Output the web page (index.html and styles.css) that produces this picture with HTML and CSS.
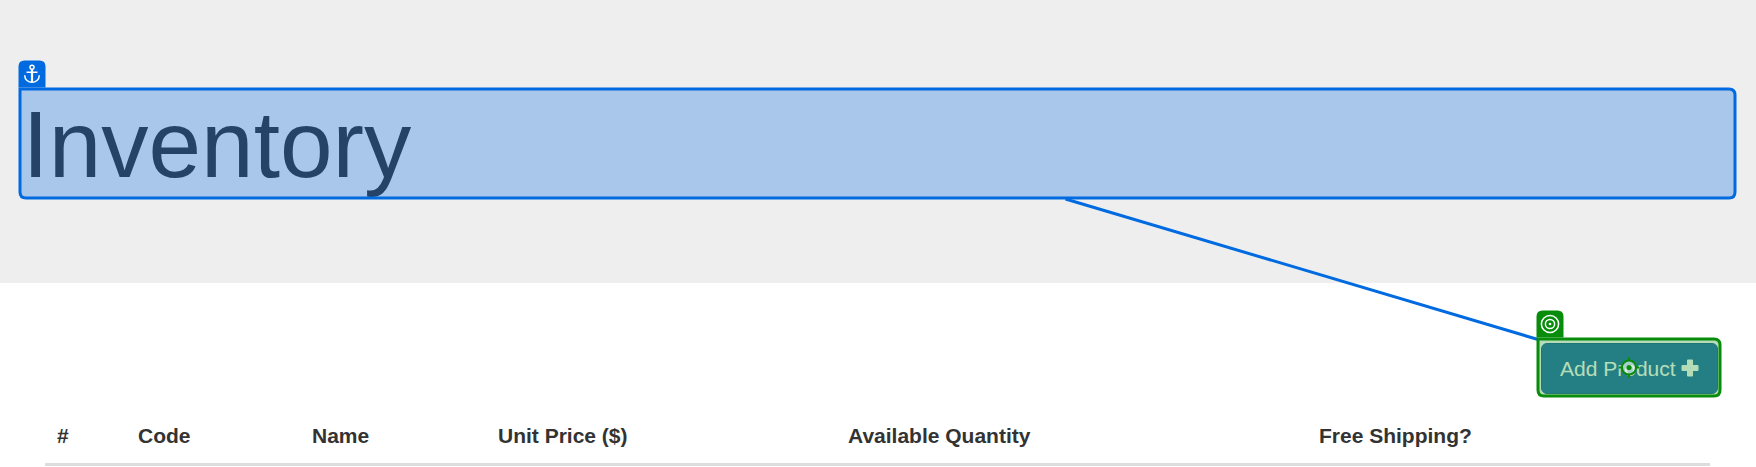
FILE: index.html
```
<!DOCTYPE html>
<html lang="en">
<head>
<meta charset="utf-8">
<title>Inventory</title>
<link rel="stylesheet" href="styles.css">
</head>
<body>
<header class="jumbotron"><h1 class="title">Inventory</h1></header>
<main class="content">
  <div class="toolbar">
    <button class="btn" type="button">Add Product
      <svg class="plus" viewBox="0 0 18 18"><path d="M7 0.5h4q1 0 1 1V6h4.5q1 0 1 1v4q0 1-1 1H12v4.5q0 1-1 1H7q-1 0-1-1V12H1.5q-1 0-1-1V7q0-1 1-1H6V1.5q0-1 1-1z"/></svg>
    </button>
  </div>
  <table class="table">
    <colgroup><col class="c-num"><col class="c-code"><col class="c-name"><col class="c-price"><col class="c-qty"><col></colgroup>
    <thead><tr><th>#</th><th>Code</th><th>Name</th><th>Unit Price ($)</th><th>Available Quantity</th><th>Free Shipping?</th></tr></thead>
  </table>
</main>
<svg class="overlay" viewBox="0 0 1756 467">
  <g class="anchor">
    <path class="link" d="M1065.5 199L1538 339.5"/>
    <path class="box" d="M20 89H1729q6 0 6 6V192q0 6-6 6H26q-6 0-6-6z"/>
    <path class="tab" d="M18.5 87.5V66.5q0-6 6-6h15q6 0 6 6v21z"/>
    <g class="glyph"><circle cx="32" cy="67.2" r="2"/><path class="shank" d="M32 69.2V82"/><path d="M26.5 72.2h11M24.7 75.2c0 9.4 14.6 9.4 14.6 0"/></g>
  </g>
  <g class="target">
    <path class="box" d="M1538 339H1714q6 0 6 6V390q0 6-6 6H1544q-6 0-6-6z"/>
    <path class="tab" d="M1536.5 337.5V316.5q0-6 6-6h15q6 0 6 6v21z"/>
    <g class="glyph"><circle cx="1550" cy="324" r="8.6"/><circle cx="1550" cy="324" r="4.6"/><circle class="dot" cx="1550" cy="324" r="1.3"/></g>
    <g class="aim"><circle cx="1629" cy="367.5" r="7"/><path d="M1629 357.2v3.4M1629 374.4v3.4M1618.7 367.5h3.4M1635.9 367.5h3.4"/><circle class="center" cx="1629" cy="367.5" r="2.6"/></g>
  </g>
</svg>
</body>
</html>
```
FILE: styles.css
```
* { box-sizing: border-box; }
body {
  margin: 0;
  height: 467px;
  overflow: hidden;
  background: #fff;
  color: #333;
  font-family: "Liberation Sans", Arial, sans-serif;
  font-size: 21px;
  line-height: 30px;
}
.jumbotron { height: 283px; padding: 92px 22.5px 0; background: #eee; }
.title { margin: 0; font-size: 94.5px; font-weight: 400; line-height: 104px; }
.content { padding: 60px 46px 0 45px; }
.toolbar { display: flex; justify-content: flex-end; margin-right: -8px; }
.btn {
  display: flex;
  align-items: center;
  gap: 5px;
  width: 177px;
  height: 51px;
  padding: 0 17px 0 18px;
  border: 1px solid #2e6da4;
  border-radius: 6px;
  background: #337ab7;
  color: #fff;
  font: inherit;
  white-space: nowrap;
}
.plus { flex: none; width: 18px; height: 18px; fill: #fff; margin-top: -2px; }
.table { width: 100%; margin-top: 14px; table-layout: fixed; border-collapse: separate; border-spacing: 0; }
.table th {
  height: 58px;
  padding: 0 12px;
  border-bottom: 3px solid #ddd;
  text-align: left;
  vertical-align: middle;
  white-space: nowrap;
}
.c-num { width: 81px; }
.c-code { width: 174px; }
.c-name { width: 186px; }
.c-price { width: 350px; }
.c-qty { width: 471px; }
.overlay { position: absolute; top: 0; left: 0; width: 1756px; height: 467px; }
.box { stroke-width: 3; }
.anchor .box { fill: rgba(0, 106, 224, .296); stroke: #006ae0; }
.anchor .tab { fill: #006ae0; }
.link { stroke: #006ae0; stroke-width: 3; }
.target .box { fill: rgba(0, 140, 10, .296); stroke: #078c0b; }
.target .tab { fill: #078c0b; }
.glyph { fill: none; stroke: #fff; stroke-width: 1.5; }
.shank { stroke-width: 2.2; }
.dot { fill: #fff; stroke: none; }
.aim { fill: rgba(255, 255, 255, .6); stroke: #078c0b; stroke-width: 2; }
.aim .center { fill: #078c0b; stroke: none; }
```
